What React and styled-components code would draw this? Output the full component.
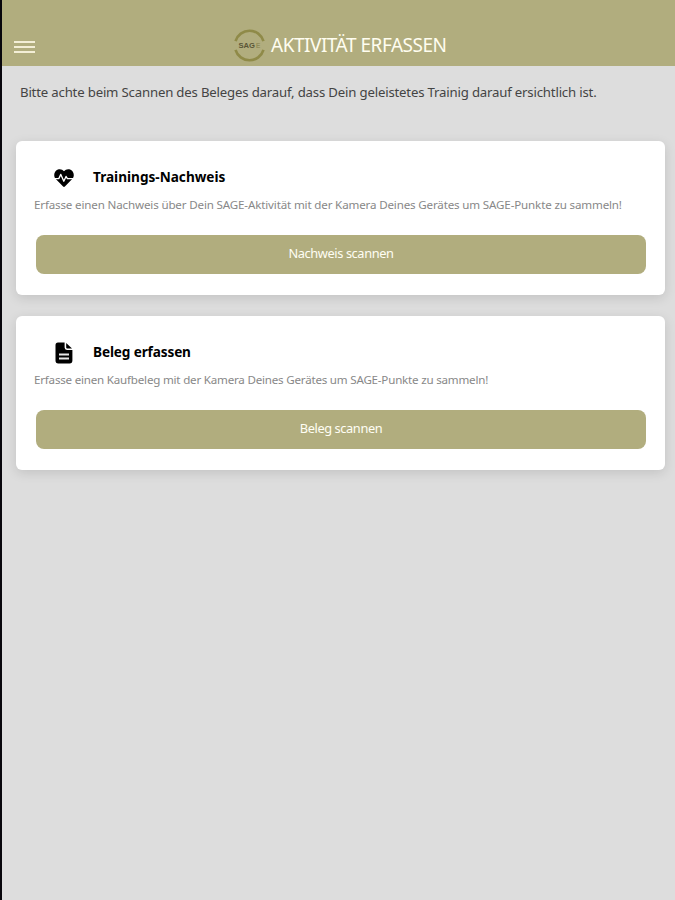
import React from 'react';
import styled, { createGlobalStyle } from 'styled-components'

const GlobalStyle = createGlobalStyle`
* {
    box-sizing: border-box;
}
body {
    margin: 0;
    background: #dddddd;
    font-family: "Noto Sans", "Open Sans", sans-serif;
}
`;

// heart with a pulse line running through it
const HeartIcon = () => (
    <HeartSvg viewBox="0 0 20 18">
        <path d="M10 2.3C12 -0.4 15.6 -0.4 17.8 1.6C20.3 4 20.4 7.8 18.2 10.1L10.9 17.6Q10 18.4 9.1 17.6L1.8 10.1C-0.4 7.8 -0.3 4 2.2 1.6C4.4 -0.4 8 -0.4 10 2.3Z" />
        <path className="line" d="M0 9.6H4.8L6.8 5.4L9.8 12.2L12 7.4L13.4 9.6H20" />
    </HeartSvg>
)

// rounded sheet with a folded corner and two text lines
const FileIcon = () => (
    <FileSvg viewBox="0 0 18 22">
        <path d="M3 0.5H9.6V5.6Q9.6 8 12 8H17.4V18.6Q17.4 21.5 14.6 21.5H3.2Q0.5 21.5 0.5 18.6V3.2Q0.5 0.5 3 0.5Z" />
        <path d="M11.2 0.9L17 6.6H12.2Q11.2 6.6 11.2 5.6Z" />
        <path className="line" d="M4 12.5H14M4 16.5H14" />
    </FileSvg>
)

const cards = [
    {
        id: 1,
        icon: <HeartIcon />,
        title: 'Trainings-Nachweis',
        titleSpacing: 0,
        text: 'Erfasse einen Nachweis über Dein SAGE-Aktivität mit der Kamera Deines Gerätes um SAGE-Punkte zu sammeln!',
        textSpacing: -0.16,
        button: 'Nachweis scannen'
    },
    {
        id: 2,
        icon: <FileIcon />,
        title: 'Beleg erfassen',
        titleSpacing: -0.13,
        text: 'Erfasse einen Kaufbeleg mit der Kamera Deines Gerätes um SAGE-Punkte zu sammeln!',
        textSpacing: -0.21,
        button: 'Beleg scannen'
    }
]

const Logo = () => (
    <LogoSvg viewBox="0 0 34 34">
        <path d="M2.6 12.6A15 15 0 0 1 31.4 12.6" />
        <path d="M2.6 21.4A15 15 0 0 0 31.4 21.4" />
        <text x="5.6" y="19.2" textLength="17" lengthAdjust="spacingAndGlyphs">SAG</text>
        <text className="light" x="23.6" y="19.2">E</text>
    </LogoSvg>
)

const App = () => {
    return (
        <Page>
            <GlobalStyle />
            <Header>
                <MenuButton aria-label="Menü">
                    <span />
                    <span />
                    <span />
                </MenuButton>
                <Brand>
                    <Logo />
                    <Title>AKTIVITÄT ERFASSEN</Title>
                </Brand>
            </Header>
            <Intro>Bitte achte beim Scannen des Beleges darauf, dass Dein geleistetes Trainig darauf ersichtlich ist.</Intro>
            <CardList>
                {cards.map(card => (
                    <Card key={card.id}>
                        <CardHead>
                            <IconBox>{card.icon}</IconBox>
                            <CardTitle $spacing={card.titleSpacing}>{card.title}</CardTitle>
                        </CardHead>
                        <CardText $spacing={card.textSpacing}>{card.text}</CardText>
                        <ScanButton>{card.button}</ScanButton>
                    </Card>
                ))}
            </CardList>
        </Page>
    );
}

export default App;

const Page = styled.div`
    width: 675px;
    height: 900px;
    overflow: hidden;
    border-left: 2px solid #08060c;
    background: #dddddd;
`;

const Header = styled.header`
    display: grid;
    grid-template-columns: 231px 1fr;
    height: 65.5px;
    padding-top: 29px;
    background: #b1ad7e;
`;

const MenuButton = styled.button`
    display: flex;
    flex-direction: column;
    gap: 3px;
    align-self: start;
    width: 21px;
    margin: 12px 0 0 11.5px;
    padding: 0;
    border: none;
    background: transparent;
    span{
        height: 2px;
        background: #f3eed6;
    }
`;

const Brand = styled.div`
    display: flex;
    align-items: flex-start;
    gap: 5px;
`;

const LogoSvg = styled.svg`
    width: 33px;
    height: 33px;
    path{
        fill: none;
        stroke: #8f8a48;
        stroke-width: 2.7;
    }
    text{
        font: 700 6.6px "Liberation Sans", sans-serif;
        fill: #5a5637;
    }
    .light{
        fill: #918c58;
    }
`;

const Title = styled.h1`
    margin: 0;
    font-size: 19px;
    font-weight: 400;
    line-height: 33px;
    letter-spacing: -0.48px;
    white-space: nowrap;
    color: #fffdf0;
`;

const Intro = styled.p`
    height: 75.5px;
    margin: 0;
    padding: 15.5px 0 0 18px;
    font-size: 13.2px;
    line-height: 22px;
    letter-spacing: -0.18px;
    white-space: nowrap;
    color: #444444;
`;

const CardList = styled.main`
    display: flex;
    flex-direction: column;
    gap: 21.6px;
    padding: 0 10px 0 14px;
`;

const Card = styled.section`
    padding: 26px 19px 21.4px 20px;
    border-radius: 6px;
    background: #ffffff;
    box-shadow: 0 3px 12px rgba(0, 0, 0, 0.12);
`;

const CardHead = styled.div`
    display: flex;
    align-items: center;
    height: 22px;
`;

const IconBox = styled.div`
    display: flex;
    justify-content: center;
    width: 57px;
    padding-right: 2px;
`;

const HeartSvg = styled.svg`
    width: 20px;
    height: 18px;
    fill: #000000;
    .line{
        fill: none;
        stroke: #ffffff;
        stroke-width: 1.3;
        stroke-linejoin: round;
    }
`;

const FileSvg = styled.svg`
    width: 18px;
    height: 22px;
    fill: #000000;
    .line{
        fill: none;
        stroke: #e8e8e8;
        stroke-width: 1.8;
    }
`;

const CardTitle = styled.h2`
    margin: 0;
    padding-bottom: 2px;
    font-size: 13.6px;
    font-weight: 700;
    line-height: 20px;
    letter-spacing: ${props => props.$spacing}px;
    color: #000000;
`;

const CardText = styled.p`
    margin: 6px 0 19.5px -2px;
    font-size: 11.6px;
    line-height: 20px;
    letter-spacing: ${props => props.$spacing}px;
    white-space: nowrap;
    color: #888888;
`;

const ScanButton = styled.button`
    display: block;
    width: 100%;
    height: 39px;
    padding: 0 0 2px;
    border: none;
    border-radius: 8px;
    background: #b1ad7e;
    font-family: inherit;
    font-size: 12.8px;
    letter-spacing: -0.4px;
    color: #fffef4;
`;
